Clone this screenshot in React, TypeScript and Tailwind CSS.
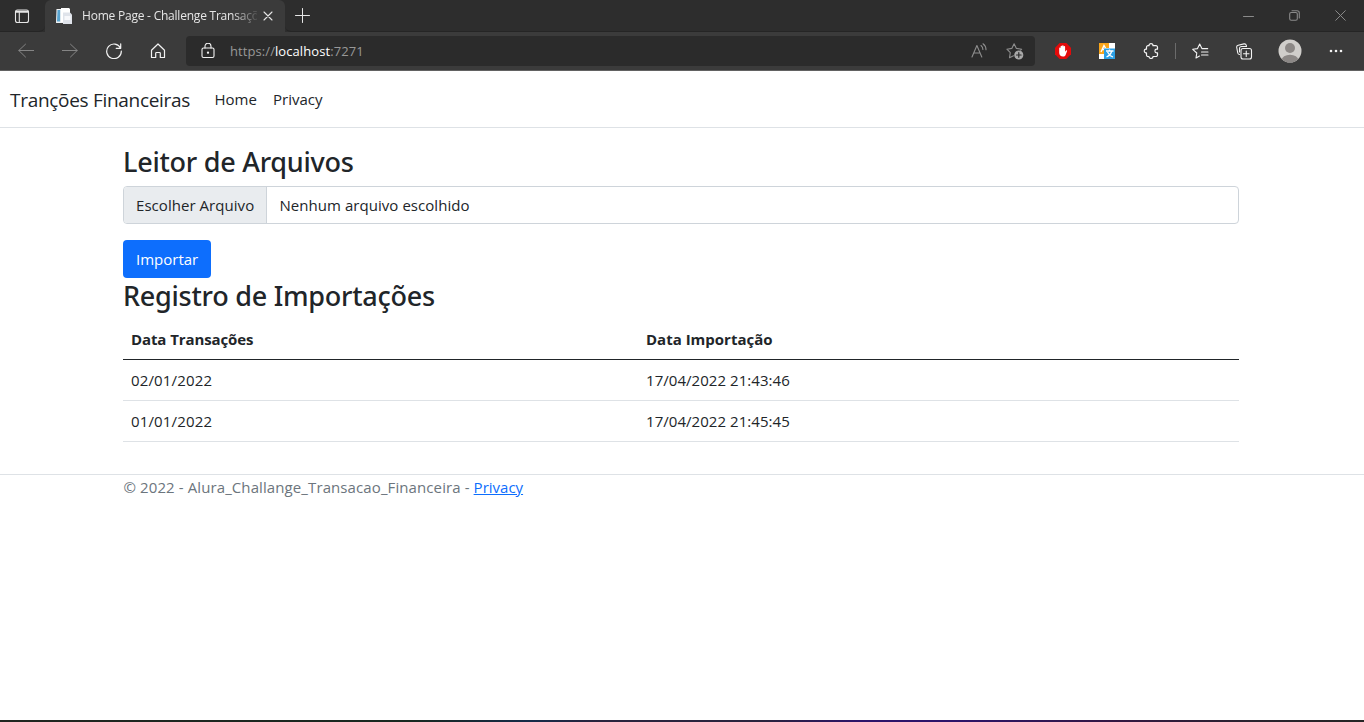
import type { ReactNode } from "react";

function Icon({ children, size = 16, className = "" }: { children: ReactNode; size?: number; className?: string }) {
  return (
    <svg
      width={size}
      height={size}
      viewBox={`0 0 ${size} ${size}`}
      fill="none"
      stroke="currentColor"
      strokeWidth="1.1"
      strokeLinecap="round"
      strokeLinejoin="round"
      className={`shrink-0 ${className}`}
    >
      {children}
    </svg>
  );
}

function TabStrip() {
  return (
    <div className="flex h-8 items-stretch bg-[#2d2d2d] text-[#e6e6e6]">
      <div className="flex w-[45px] items-center rounded-br-md border-b border-[#252525] pl-[14px]">
        <Icon>
          <rect x="1.5" y="2" width="13" height="12.5" rx="2" />
          <path d="M1.5 4.2h13M2 3.3h12M5.3 5v9.5" />
        </Icon>
      </div>
      <div className="flex w-[240px] items-center rounded-t-md bg-[#3b3b3b] pl-[11px]">
        <svg width="17" height="17" viewBox="0 0 17 17" className="shrink-0">
          <path d="M.5 1h11v14H0z" fill="#f1f3f5" />
          <path d="M1.500 2h2.600v11.500H1z" fill="#57a3cf" />
          <path d="M5 0h8l1 1v13H5z" fill="#fff" />
          <path d="M7 4.500h7l2 2V16H7z" fill="#dfe3ea" />
          <path d="M8.500 8h6v4h-6z" fill="#f7f8fb" />
        </svg>
        <div className="ml-[9px] w-[175px] overflow-hidden whitespace-nowrap text-[12px] tracking-[-0.22px] [mask-image:linear-gradient(to_right,black_150px,transparent_178px)]">
          Home Page - Challenge Transaçõ
        </div>
        <Icon size={10} className="ml-[6px]">
          <path d="M1 1l8 8M9 1l-8 8" />
        </Icon>
      </div>
      <div className="flex flex-1 items-center justify-between rounded-bl-md border-b border-[#252525] pl-[10px] pr-[18px]">
        <Icon size={15}>
          <path d="M.5 7.500h14M7.500.5v14" strokeWidth="1" />
        </Icon>
        <div className="flex items-center gap-[35px] text-[#8a8a8a]">
          <Icon size={11}>
            <path d="M.5 6.500h10" strokeWidth="1" />
          </Icon>
          <Icon size={11}>
            <rect x=".7" y="2.500" width="7.600" height="7.800" rx="1.500" />
            <path d="M3 .7h5a2.300 2.300 0 0 1 2.300 2.300v5" />
          </Icon>
          <Icon size={11}>
            <path d="M.7.7l9.600 9.600M10.300.7L.7 10.300" strokeWidth="1" />
          </Icon>
        </div>
      </div>
    </div>
  );
}

function Toolbar() {
  return (
    <div className="flex h-[39px] items-center border-b border-[#626262] bg-[#3b3b3b] text-[#f3f3f3]">
      <div className="flex items-center gap-[28px] pl-[18px]">
        <Icon className="text-[#858585]">
          <path d="M7.500 1.200L.8 7.500l6.700 6.500M.8 7.500h15" strokeWidth="1" />
        </Icon>
        <Icon className="text-[#858585]">
          <path d="M8.500 1.200L15.200 7.500l-6.700 6.500M15.200 7.500H.2" strokeWidth="1" />
        </Icon>
        <Icon>
          <path d="M14.600 5.200A7.300 7.300 0 1 0 15.300 8M14.700 .8v4.500h-4.500" strokeWidth="1.200" />
        </Icon>
        <Icon>
          <path d="M1.500 7.200L8 1l6.500 6.200v7.300h-4.200V10.300a.8.8 0 0 0-.8-.8h-3a.8.8 0 0 0-.8.8v4.200H1.500z" strokeWidth="1.200" />
        </Icon>
      </div>
      <div className="ml-[20px] flex h-[30px] w-[849px] items-center rounded-[4px] bg-[#2b2b2b] pl-[14px] pr-[11px]">
        <Icon>
          <rect x="2" y="5" width="12" height="9.500" rx="1.500" />
          <path d="M5 5V3.200a3 3 0 0 1 6 0V5" />
          <circle cx="8" cy="9.700" r=".6" fill="currentColor" />
        </Icon>
        <div className="ml-[14px] flex-1 text-[13px] tracking-[0.08px] text-[#989898]">
          https://<span className="text-white">localhost</span>:7271
        </div>
        <Icon className="text-[#8d8d8d]">
          <path d="M1 14L5.900 2.500 10.800 14M2.700 10h6.400M10 2.500c1.300 1 1.900 2.300 1.900 4M12 .8c2 1.500 3 3.500 3 6" />
        </Icon>
        <Icon size={18} className="ml-[19px] text-[#8d8d8d]">
          <path d="M7.500 13.700l-4 2 .8-5L.9 7.200l4.900-.8L8.100 1.800l2.300 4.600 5.300.8-1 1" />
          <circle cx="12.800" cy="13" r="4" fill="#a9a9a9" stroke="#a9a9a9" />
          <path d="M10.500 13h4.600M12.800 10.700v4.600" stroke="#2b2b2b" strokeWidth="1.200" />
        </Icon>
      </div>
      <svg width="16" height="16" viewBox="0 0 16 16" className="ml-[20px] shrink-0">
        <path d="M4.700 0h6.600L16 4.700v6.600L11.300 16H4.700L0 11.300V4.700z" fill="#e30b0b" />
        <path d="M4.200 8V5.200a.7.7 0 0 1 1.400 0V3.600a.75.75 0 0 1 1.500 0v-.7a.75.75 0 0 1 1.500 0v.8a.75.75 0 0 1 1.500 0v5l.9-1.300c.6-.6 1.300-.1 1.100.5L10.600 12c-.5 1-1.300 1.600-2.600 1.600-2.300 0-3.800-1.400-3.800-3.800z" fill="#fff" />
      </svg>
      <svg width="16" height="16" viewBox="0 0 16 16" className="ml-[28px] shrink-0">
        <path d="M0 0h16v16H0z" fill="#fff" />
        <path d="M0 0h10v5H5v6H0z" fill="#f9a51a" />
        <path d="M2 9L5 2.500 7 6M3 6.500h3" fill="none" stroke="#fff" strokeWidth="1.400" />
        <path d="M5 5.500h11V16H5z" fill="#2a9fe5" />
        <path d="M7 8h7.500M10.500 6.500V8M12.700 8c-.6 2.700-2.500 4.700-5.200 6M8.500 9c1 2.300 2.700 4 5.500 5" fill="none" stroke="#fff" strokeWidth="1.300" />
      </svg>
      <Icon className="ml-[28px]">
        <path d="M6 2.700a2 2 0 0 1 4 0h3a1.500 1.500 0 0 1 1.500 1.500v2h-.8a1.800 1.800 0 0 0 0 3.600h.8v2.200a1.500 1.500 0 0 1-1.500 1.500h-3a2 2 0 0 1-4 0H5A1.500 1.500 0 0 1 3.500 12V9.900h-.8a1.900 1.900 0 0 1 0-3.700h.8v-2A1.500 1.500 0 0 1 5 2.700z" strokeWidth="1.200" />
      </Icon>
      <div className="ml-[16px] h-4 w-px bg-[#6b6b6b]" />
      <Icon size={17} className="ml-[16px]">
        <path d="M4 15l.8-5L.7 6.300l4.800-.7L7.700 1l2.200 4.600h5.800M4 15L7.500 13M9.500 9h6.500M9.500 12h6.500" />
      </Icon>
      <Icon size={17} className="ml-[27px]">
        <rect x="5" y="5.500" width="10.500" height="10.500" rx="2" />
        <path d="M10.250 8v5.500M7.500 10.750h5.500M3.500 11.500A2 2 0 0 1 1.700 9.700L.7 4.500a2 2 0 0 1 1.500-2.300L8 .9a2 2 0 0 1 2.300 1.500l.2.800M3.500 9V5.500a2 2 0 0 1 2-2H10.500" />
      </Icon>
      <svg width="24" height="24" viewBox="0 0 24 24" className="ml-[25px] shrink-0">
        <defs>
          <clipPath id="avatar">
            <circle cx="12" cy="12" r="11.500" />
          </clipPath>
        </defs>
        <circle cx="12" cy="12" r="11.500" fill="#d0cecb" />
        <g clipPath="url(#avatar)" fill="#8c8886">
          <circle cx="12" cy="9" r="5" />
          <ellipse cx="12" cy="21" rx="8.300" ry="5.300" />
        </g>
      </svg>
      <svg width="14" height="4" viewBox="0 0 14 4" className="ml-[27px] shrink-0" fill="#f3f3f3">
        <circle cx="2" cy="2" r="1.300" />
        <circle cx="7" cy="2" r="1.300" />
        <circle cx="12" cy="2" r="1.300" />
      </svg>
    </div>
  );
}

const imports = [
  { date: "02/01/2022", importedAt: "17/04/2022 21:43:46" },
  { date: "01/01/2022", importedAt: "17/04/2022 21:45:45" },
];

export default function App() {
  return (
    <div className="flex h-[722px] w-[1364px] flex-col overflow-hidden bg-white font-['Open_Sans','Noto_Sans',sans-serif] text-[15px] leading-6 text-[#212529]">
      <TabStrip />
      <Toolbar />
      <header className="flex h-[57px] items-center border-b border-[#dee2e6] pl-[10px]">
        <a className="w-[196px] whitespace-nowrap pt-px text-[19px] tracking-[-0.3px]">Tranções Financeiras</a>
        <nav className="flex">
          <a className="w-[59px] pl-[8.500px]">Home</a>
          <a className="pl-[8px]">Privacy</a>
        </nav>
      </header>
      <main className="ml-[123px] flex w-[1116px] flex-col items-start pt-[17px]">
        <h2 className="h-[41px] font-['Noto_Sans','Open_Sans',sans-serif] text-[27px] font-medium leading-[34px] tracking-[-0.25px]">Leitor de Arquivos</h2>
        <div className="flex h-[38px] w-full items-stretch overflow-hidden rounded-[4px] border border-[#ced4da] leading-9">
          <span className="w-[143px] whitespace-nowrap border-r border-[#ced4da] bg-[#e9ecef] pl-[12px] tracking-[0.050px]">Escolher Arquivo</span>
          <span className="pl-[12.500px] tracking-[0.050px]">Nenhum arquivo escolhido</span>
        </div>
        <button className="mt-4 h-[38px] w-[88px] rounded-[4px] bg-[#0d6efd] pl-[13px] text-left text-white">Importar</button>
        <h2 className="h-[41px] pt-px font-['Noto_Sans','Open_Sans',sans-serif] text-[27px] font-medium leading-[34px] tracking-[-0.25px]">Registro de Importações</h2>
        <table className="w-full table-fixed border-collapse text-left">
          <thead>
            <tr className="h-[40px] border-b border-[#212529]">
              <th className="w-[515px] px-2 font-bold tracking-[-0.1px]">Data Transações</th>
              <th className="px-2 font-bold">Data Importação</th>
            </tr>
          </thead>
          <tbody>
            {imports.map((row) => (
              <tr key={row.date} className="h-[41px] border-b border-[#dee2e6]">
                <td className="px-2 tracking-[0.15px]">{row.date}</td>
                <td className="px-2 tracking-[0.050px]">{row.importedAt}</td>
              </tr>
            ))}
          </tbody>
        </table>
      </main>
      <footer className="mt-8 border-t border-[#dee2e6] pl-[123.500px] tracking-[0.1px] text-[#6c757d]">
        &copy; 2022 - Alura_Challange_Transacao_Financeira - <a className="tracking-normal text-[#0d6efd] underline">Privacy</a>
      </footer>
      <div className="mt-auto h-[2px] bg-[linear-gradient(to_right,#202620_0%,#182820_30%,#152b49_39%,#29233d_44%,#29233d_56%,#2c146a_63%,#2c146a_70%,#321842_82%,#29232e_92%,#252525_100%)]" />
    </div>
  );
}
